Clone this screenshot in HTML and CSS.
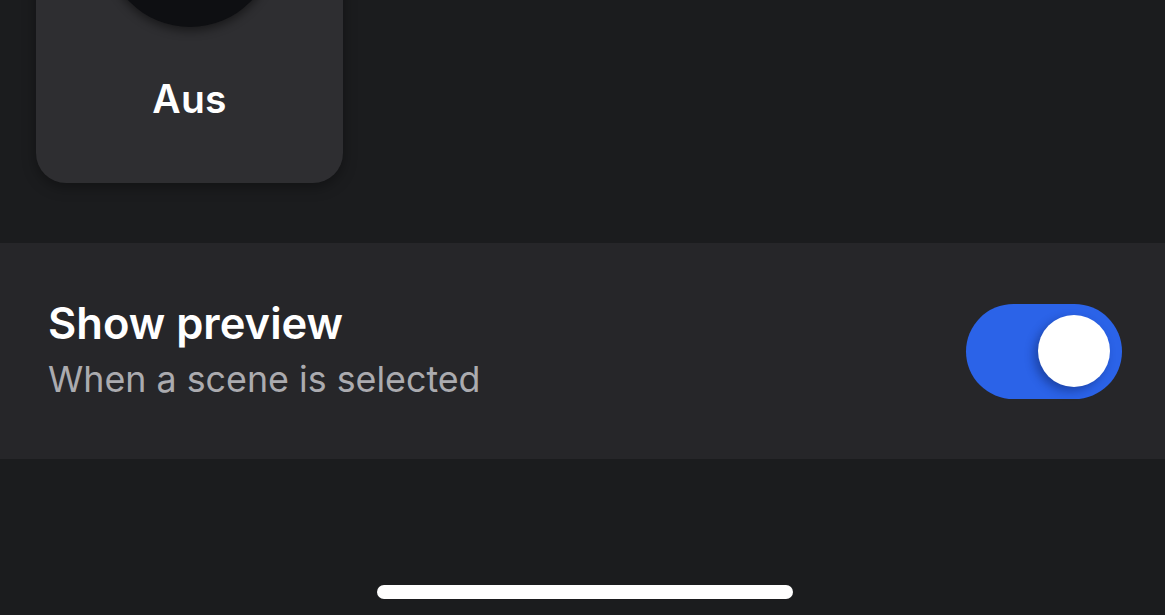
FILE: index.html
```html
<!DOCTYPE html>
<html lang="en">

<head>
    <meta charset="UTF-8">
    <meta name="viewport" content="width=device-width, initial-scale=1.0">
    <title>Scene settings</title>
    <link rel="stylesheet" href="styles.css">
</head>

<body>
    <div class="scenes">
        <div class="scene-card">
            <div class="scene-icon"></div>
            <div class="scene-name">Aus</div>
        </div>
    </div>

    <div class="setting-row">
        <div class="setting-text">
            <div class="setting-title">Show preview</div>
            <div class="setting-sub">When a scene is selected</div>
        </div>
        <div class="toggle on">
            <div class="knob"></div>
        </div>
    </div>

    <div class="home-bar"></div>
</body>

</html>
```

FILE: styles.css
```css
* {
    box-sizing: border-box;
}

body {
    margin: 0;
    height: 615px;
    overflow: hidden;
    background-color: #1b1c1e;
    font-family: Inter, "Noto Sans", sans-serif;
    color: #ffffff;
    display: flex;
    flex-direction: column;
}

.scenes {
    padding-left: 36px;
    height: 243px;
}

.scene-card {
    width: 307px;
    height: 243px;
    margin-top: -60px;
    background-color: #2e2e31;
    border-radius: 30px;
    overflow: hidden;
    display: flex;
    flex-direction: column;
    align-items: center;
    box-shadow: 0 4px 14px rgba(0, 0, 0, 0.35);
}

.scene-icon {
    width: 170px;
    height: 170px;
    margin-top: -83px;
    border-radius: 50%;
    background-color: #0e0f12;
    box-shadow: 0 4px 10px rgba(0, 0, 0, 0.45);
    flex-shrink: 0;
}

.scene-name {
    margin-top: 48px;
    font-size: 39px;
    font-weight: 600;
    letter-spacing: 0.2px;
}

.setting-row {
    height: 216px;
    background-color: #262629;
    display: flex;
    align-items: center;
    justify-content: space-between;
    padding: 0 43px 0 48px;
}

.setting-text {
    display: flex;
    flex-direction: column;
}

.setting-title {
    font-size: 43.5px;
    font-weight: 600;
    line-height: 52px;
}

.setting-sub {
    margin-top: 4px;
    font-size: 35.8px;
    color: #ababaf;
    line-height: 53px;
}

.toggle {
    width: 156px;
    height: 95px;
    border-radius: 48px;
    background-color: #2b63e8;
    display: flex;
    align-items: center;
    padding: 0 12px;
}

.toggle.on {
    justify-content: flex-end;
}

.knob {
    width: 72px;
    height: 72px;
    border-radius: 50%;
    background-color: #ffffff;
    box-shadow: -4px 4px 10px rgba(10, 30, 90, 0.45);
}

.home-bar {
    width: 416px;
    height: 14px;
    border-radius: 7px;
    background-color: #ffffff;
    margin: 126px 0 0 377px;
}
```
